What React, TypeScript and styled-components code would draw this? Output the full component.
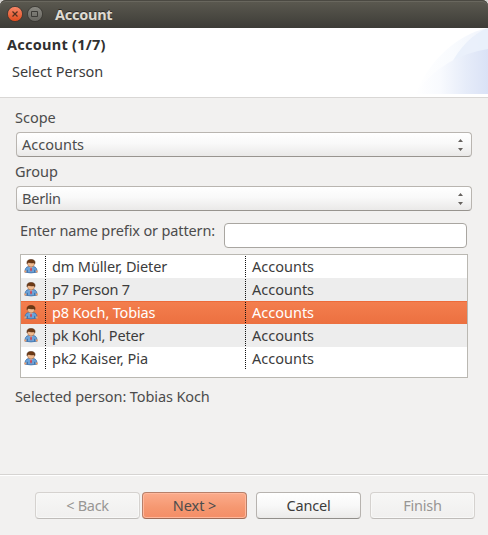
import React from "react";
import styled, { createGlobalStyle, css } from "styled-components";

const GlobalStyle = createGlobalStyle`
  *, *::before, *::after { box-sizing: border-box; }
  body {
    margin: 0;
    background: #f2f1f0;
    font-family: "Noto Sans", "Open Sans", sans-serif;
    font-size: 14.5px;
    line-height: 18px;
    color: #4c4c4c;
  }
`;

const Text = styled.span<{ $track?: number }>`
  letter-spacing: ${(p) => p.$track ?? -0.1}px;
  white-space: nowrap;
`;

const Window = styled.main`
  display: flex;
  flex-direction: column;
  width: 488px;
  height: 535px;
  overflow: hidden;
  background: #f2f1f0;
`;

const Backdrop = styled.div`
  background: #d5d3d0;
`;

const TitleBar = styled.header`
  display: flex;
  align-items: center;
  gap: 4px;
  height: 28px;
  padding-left: 7px;
  border-radius: 6px 6px 0 0;
  background: linear-gradient(#56544c, #5a584f 2px, #3d3c37);
  box-shadow: inset 0 1px #4b4942, inset 0 2px #69675e;
  color: #dfdbd2;
  font-weight: 700;
  text-shadow: 0 -1px #2b2a26;
`;

const WindowTitle = styled(Text)`
  margin-left: 8px;
  padding-bottom: 1px;
`;

const Banner = styled.section`
  display: flex;
  justify-content: space-between;
  height: 70px;
  background: #fff;
  border-bottom: 1px solid #d9d7d5;
  color: #3c3c3c;
`;

const BannerCopy = styled.div`
  display: flex;
  flex-direction: column;
  padding: 7px 0 0 7px;
`;

const BannerTitle = styled(Text)`
  font-weight: 700;
  color: #303030;
`;

const BannerMessage = styled(Text)`
  margin: 9px 0 0 5px;
`;

const Form = styled.section`
  display: flex;
  flex-direction: column;
  flex: 1;
  padding: 10px 16px 0 15px;
`;

const FieldLabel = styled.label`
  height: 20px;
`;

const Combo = styled.div`
  display: flex;
  align-items: center;
  justify-content: space-between;
  height: 25px;
  margin: 4px 0 5px 1px;
  padding: 0 7px 0 5px;
  border: 1px solid #b9b5b0;
  border-bottom-color: #98948f;
  border-radius: 4px;
  background: linear-gradient(#fff, #f9f9f9 45%, #eae9e8);
`;

const ControlText = styled(Text)`
  padding-bottom: 2px;
`;

const FilterRow = styled.div`
  display: flex;
  justify-content: space-between;
  margin: 7px 5px 6px 5px;
`;

const FilterLabel = styled(Text)`
  margin-top: -2px;
`;

const Entry = styled.input`
  width: 243px;
  height: 25px;
  border: 1px solid #a9a6a1;
  border-radius: 4px;
  background: #fff;
  outline: none;
`;

const Table = styled.div`
  height: 124px;
  margin: 0 4px 0 5px;
  border: 1px solid #bab8b2;
  background: #fff;
  color: #3c3c3c;
`;

const Row = styled.div<{ $tone: "plain" | "striped" | "selected" }>`
  display: grid;
  grid-template-columns: 24px 200px 1fr;
  height: 23px;
  ${(p) => p.$tone === "striped" && css`background: #ededed;`}
  ${(p) =>
    p.$tone === "selected" &&
    css`
      background: linear-gradient(#ed6b3a 0 1px, #f37e4e 1px, #ec7040);
      color: #fff;
    `}
`;

const Cell = styled.div<{ $ruled?: boolean; $icon?: boolean }>`
  display: flex;
  align-items: flex-start;
  padding: ${(p) => (p.$icon ? "4px 0 0 3px" : "2px 0 0 7px")};
  ${(p) =>
    p.$ruled &&
    css`
      background: repeating-linear-gradient(transparent 0 1px, #111 1px 2px) left top / 1px 100% no-repeat;
    `}
`;

const Status = styled(Text)`
  margin-top: 9px;
`;

const ButtonBar = styled.footer`
  display: flex;
  height: 61px;
  padding: 17px 13px 0 35px;
  border-top: 1px solid #d6d4d2;
  box-shadow: inset 0 1px #fff;
`;

const Button = styled.button<{ $kind?: "primary" | "muted"; $gap: number }>`
  display: flex;
  align-items: center;
  justify-content: center;
  width: 105px;
  height: 27px;
  margin: 0 ${(p) => p.$gap}px 0 0;
  padding: 0;
  border: 1px solid #b7b3af;
  border-bottom-color: #918e8a;
  border-radius: 4px;
  background: linear-gradient(#fff, #f8f8f8 50%, #ebeae9);
  color: #3c3c3c;
  font: inherit;
  ${(p) =>
    p.$kind === "primary" &&
    css`
      border-color: #b7806a;
      border-bottom-color: #9d6b57;
      background: linear-gradient(#fbab8b, #f59770 60%, #f48d66);
      box-shadow: inset 0 0 0 1px #ffb89c;
      color: #4c4c4c;
    `}
  ${(p) =>
    p.$kind === "muted" &&
    css`
      border-color: #d5d2cf;
      border-bottom-color: #bfbcb9;
      background: linear-gradient(#f7f7f6, #f0efee);
      box-shadow: inset 0 0 0 1px #f8f8f7;
      color: #989694;
    `}
`;

const WindowControl = ({ kind }: { kind: "close" | "maximize" }) => (
  <svg width="16" height="16" viewBox="0 0 16 16">
    <defs>
      <linearGradient id={kind} x2="0" y2="1">
        <stop stopColor={kind === "close" ? "#f7896b" : "#8b8a83"} />
        <stop offset="1" stopColor={kind === "close" ? "#df4b1c" : "#65645e"} />
      </linearGradient>
    </defs>
    <circle cx="8" cy="8" r="7.6" fill={`url(#${kind})`} stroke="#35342f" strokeWidth=".8" />
    {kind === "close" ? (
      <path d="M5.5 5.5l5 5m0-5l-5 5" stroke="#51301f" strokeWidth="1.2" />
    ) : (
      <path d="M4.5 5.5h6v5h-6z" fill="none" stroke="#3c3b37" strokeWidth="1" />
    )}
  </svg>
);

const ComboArrows = () => (
  <svg width="7" height="13" viewBox="0 0 7 13">
    <path d="M1 4l2.5-3L6 4zM1 10l2.5 3L6 10z" fill="#66625e" />
  </svg>
);

const BannerArt = () => (
  <svg width="72" height="66" viewBox="0 0 72 66">
    <defs>
      <linearGradient id="outerArc">
        <stop stopColor="#fff" />
        <stop offset=".5" stopColor="#f9fbfe" />
        <stop offset="1" stopColor="#f0f4fc" />
      </linearGradient>
      <linearGradient id="innerArc">
        <stop stopColor="#fff" />
        <stop offset=".35" stopColor="#f8fafe" />
        <stop offset=".7" stopColor="#e6ecf9" />
        <stop offset="1" stopColor="#dae2f6" />
      </linearGradient>
    </defs>
    <path d="M-1 66C14 32 40 7 72 0v66z" fill="url(#outerArc)" />
    <path d="M34 38Q49 9 72 0v38z" fill="#e8eefa" opacity=".85" />
    <path d="M-1 66Q26 28 72 21v45z" fill="url(#innerArc)" />
  </svg>
);

const PersonIcon = () => (
  <svg width="14" height="15" viewBox="0 0 14 15">
    <path d="M1 13.2Q.8 8.2 4.3 7.6h5.4q3.5.6 3.3 5.6-6 1.4-12 0z" fill="#6ba2d8" stroke="#3b6fa8" strokeWidth=".8" />
    <path d="M5.3 7.8L7 10.4l1.8-2.6z" fill="#c5d3e6" />
    <path d="M6.4 8.4h1.3l.4 2.6L7 12.8 6 11z" fill="#c94a5a" />
    <path d="M3.3 10.8v2.4m7.4-2.4v2.4" stroke="#33649b" strokeWidth=".9" />
    <path d="M3.5 3.2v1.9Q4 8 7 8q3.1 0 3.5-2.9V3.2z" fill="#f0b98e" stroke="#a56d48" strokeWidth=".6" />
    <path d="M3 4.6Q2.6.5 7 .5q4.5 0 4 4.1l-.9-.8Q7 4.2 4.4 3.2z" fill="#6f3a14" stroke="#4e2a12" strokeWidth=".6" />
    <path d="M.3 11.5h2v2h-2zm11.5 0h2v2h-2z" fill="#eaa172" />
  </svg>
);

const people = [
  { name: "dm Müller, Dieter", track: -0.13 },
  { name: "p7 Person 7", track: -0.27 },
  { name: "p8 Koch, Tobias", track: -0.18 },
  { name: "pk Kohl, Peter", track: -0.19 },
  { name: "pk2 Kaiser, Pia", track: -0.04 },
];

export default function App() {
  return (
    <Window>
      <GlobalStyle />
      <Backdrop>
        <TitleBar>
          <WindowControl kind="close" />
          <WindowControl kind="maximize" />
          <WindowTitle $track={-0.27}>Account</WindowTitle>
        </TitleBar>
      </Backdrop>
      <Banner>
        <BannerCopy>
          <BannerTitle $track={0.25}>Account (1/7)</BannerTitle>
          <BannerMessage $track={-0.03}>Select Person</BannerMessage>
        </BannerCopy>
        <BannerArt />
      </Banner>
      <Form>
        <FieldLabel><Text $track={0}>Scope</Text></FieldLabel>
        <Combo><ControlText $track={0}>Accounts</ControlText><ComboArrows /></Combo>
        <FieldLabel><Text $track={0}>Group</Text></FieldLabel>
        <Combo><ControlText $track={-0.2}>Berlin</ControlText><ComboArrows /></Combo>
        <FilterRow>
          <FilterLabel $track={-0.13}>Enter name prefix or pattern:</FilterLabel>
          <Entry aria-label="Name prefix or pattern" />
        </FilterRow>
        <Table>
          {people.map((person, i) => (
            <Row key={person.name} $tone={i === 2 ? "selected" : i % 2 ? "striped" : "plain"}>
              <Cell $icon><PersonIcon /></Cell>
              <Cell $ruled><Text $track={person.track}>{person.name}</Text></Cell>
              <Cell $ruled><Text $track={0}>Accounts</Text></Cell>
            </Row>
          ))}
        </Table>
        <Status>Selected person: Tobias Koch</Status>
      </Form>
      <ButtonBar>
        <Button $kind="muted" $gap={2} disabled><ControlText $track={-0.3}>&lt; Back</ControlText></Button>
        <Button $kind="primary" $gap={9}><ControlText>Next &gt;</ControlText></Button>
        <Button $gap={9}><ControlText $track={-0.2}>Cancel</ControlText></Button>
        <Button $kind="muted" $gap={0} disabled><ControlText $track={-0.2}>Finish</ControlText></Button>
      </ButtonBar>
    </Window>
  );
}
